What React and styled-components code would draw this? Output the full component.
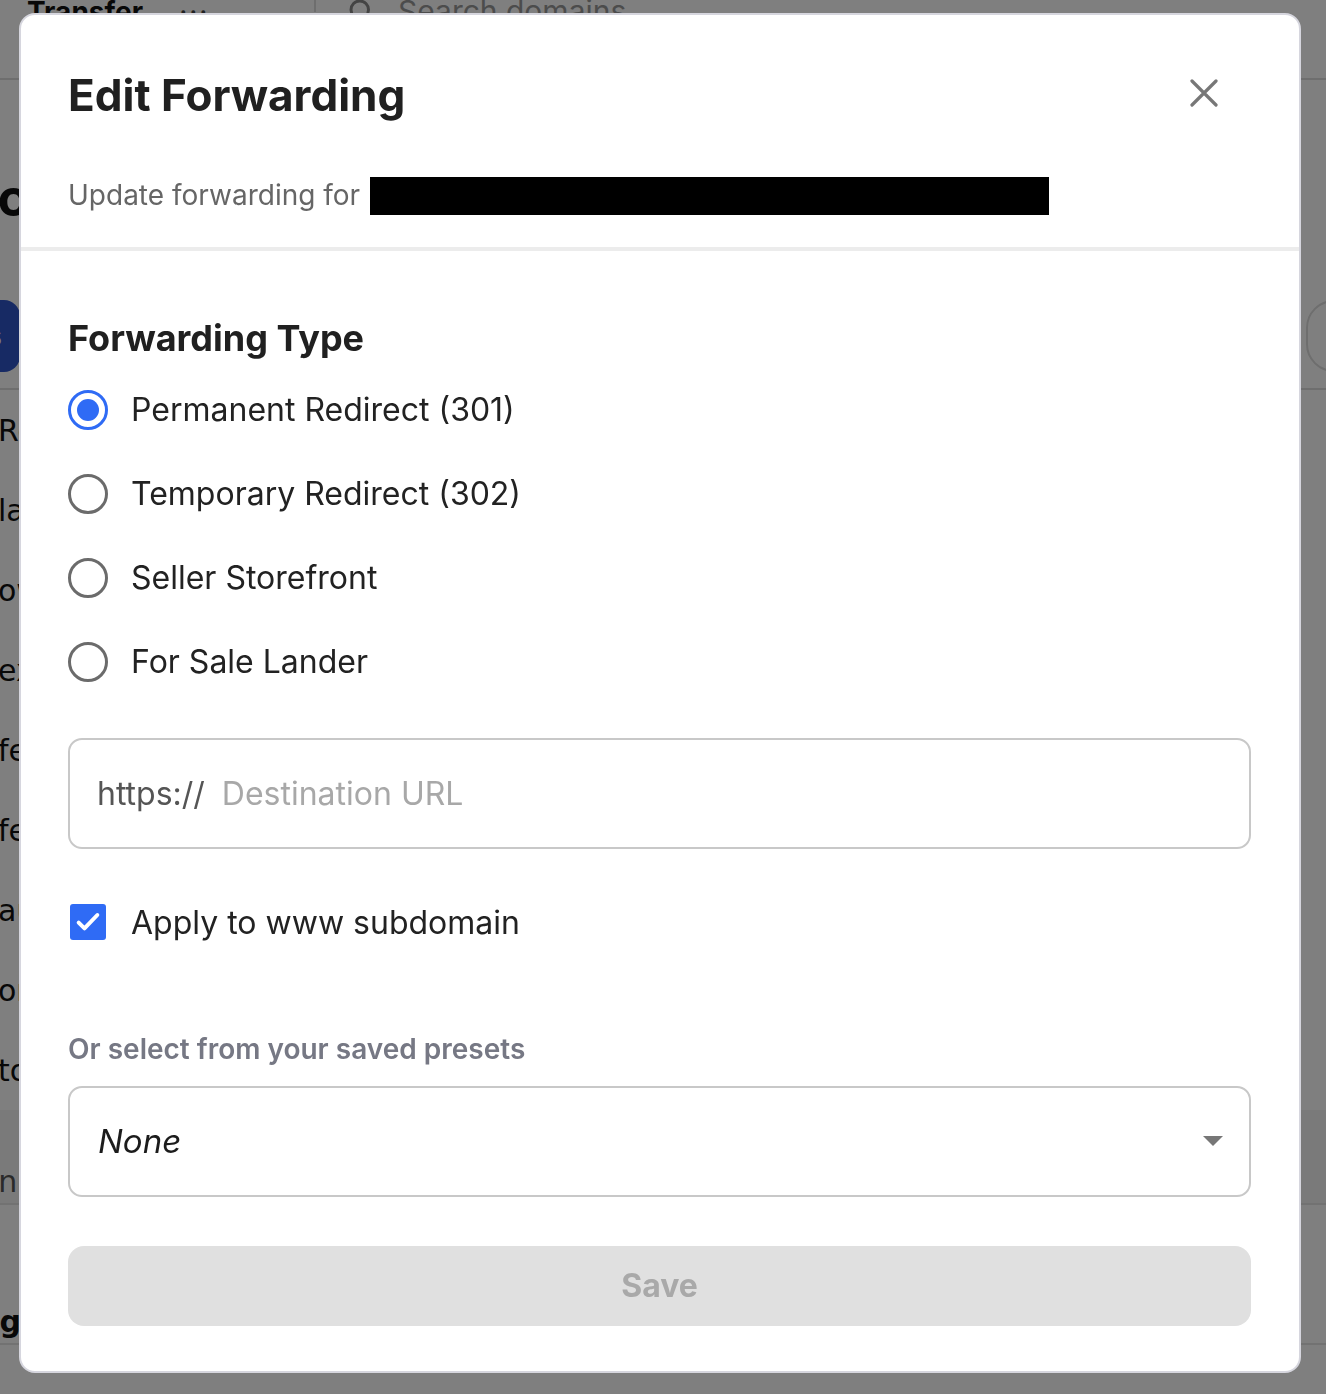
import React, { useState } from 'react';
import styled, { createGlobalStyle } from 'styled-components';

const GlobalStyle = createGlobalStyle`
  * { box-sizing: border-box; }
  html, body { margin: 0; padding: 0; }
  body {
    font-family: Inter, "Noto Sans", "Liberation Sans", sans-serif;
    background: #ffffff;
    overflow: hidden;
  }
`

/* ---------- the page behind the dialog ---------- */

const Page = styled.div`
  width: 1326px;
  height: 1394px;
  background: #ffffff;
  color: #111;
  overflow: hidden;
`
const TopBar = styled.div`
  display: flex;
  align-items: flex-start;
  height: 80px;
  border-bottom: 2px solid #dcdcdc;
`
const Brand = styled.div`
  padding-left: 27px;
  width: 316px;
  font-size: 28px;
  font-weight: 700;
  line-height: 1;
  margin-top: -2px;
  display: flex;
  gap: 36px;
  border-right: 2px solid #dcdcdc;
  height: 14px;
`
const Dots = styled.span`
  font-weight: 400;
  color: #444;
  letter-spacing: 2px;
`
const Search = styled.div`
  display: flex;
  gap: 22px;
  align-items: flex-start;
  padding-left: 30px;
  font-size: 30px;
  line-height: 1;
  margin-top: -4px;
  color: #999;
`
const Heading = styled.div`
  margin: 92px 0 0 -40px;
  font-size: 52px;
  font-weight: 700;
  line-height: 1;
`
const Toolbar = styled.div`
  display: flex;
  justify-content: space-between;
  align-items: center;
  margin-top: 76px;
  height: 72px;
`
const BlueButton = styled.div`
  margin-left: -120px;
  width: 140px;
  height: 72px;
  border-radius: 16px;
  background: #2f55c8;
  color: #fff;
  font-size: 28px;
  font-weight: 600;
  display: flex;
  align-items: center;
  justify-content: flex-end;
  padding-right: 18px;
`
const OutlineButton = styled.div`
  margin-right: -120px;
  width: 140px;
  height: 72px;
  border-radius: 28px;
  border: 2px solid #dcdcdc;
`
const Table = styled.div`
  margin-top: 16px;
  border-top: 2px solid #dcdcdc;
`
const Row = styled.div`
  height: ${p => p.$h || 80}px;
  display: flex;
  align-items: ${p => (p.$bottom ? 'flex-end' : 'center')};
  padding-bottom: ${p => (p.$bottom ? 4 : 0)}px;
  margin-left: ${p => p.$shift || -2}px;
  font-family: "DejaVu Sans", sans-serif;
  font-size: 30px;
  color: ${p => (p.$muted ? '#555' : '#111')};
  font-weight: ${p => (p.$bold ? 700 : 400)};
  background: ${p => (p.$shade ? '#f4f4f4' : 'transparent')};
  border-bottom: ${p => (p.$line ? '2px solid #e4e4e4' : 'none')};
`

/* ---------- the dialog ---------- */

const Overlay = styled.div`
  position: fixed;
  inset: 0;
  background: rgba(0, 0, 0, 0.5);
  display: flex;
  padding: 13px 25px 21px 19px;
`
const Modal = styled.div`
  flex: 1;
  background: #ffffff;
  border-radius: 16px;
  border: 2px solid #d6d6de;
  display: flex;
  flex-direction: column;
  overflow: hidden;
`
const Header = styled.div`
  padding: 54px 48px 32px 47px;
  border-bottom: 4px solid #ececec;
`
const TitleRow = styled.div`
  display: flex;
  justify-content: space-between;
  align-items: center;
`
const Title = styled.h1`
  margin: 0;
  font-size: 44px;
  font-weight: 700;
  line-height: 1.2;
  color: #202020;
`
const CloseButton = styled.button`
  border: none;
  background: transparent;
  padding: 0;
  margin-right: 33px;
  margin-bottom: 4px;
  width: 28px;
  height: 28px;
  display: flex;
  align-items: center;
  justify-content: center;
  cursor: pointer;
`
const SubRow = styled.div`
  display: flex;
  align-items: center;
  gap: 10px;
  margin-top: 55px;
`
const Subtitle = styled.span`
  font-size: 28px;
  color: #666666;
  line-height: 1.2;
`
const Redacted = styled.span`
  display: inline-block;
  width: 679px;
  height: 38px;
  background: #000;
`
const Body = styled.div`
  padding: 66px 48px 46px 47px;
  display: flex;
  flex-direction: column;
`
const SectionTitle = styled.h2`
  margin: 0 0 8px;
  font-size: 36px;
  font-weight: 700;
  line-height: 1.2;
  color: #202020;
`
const RadioList = styled.div`
  display: flex;
  flex-direction: column;
`
const Option = styled.label`
  display: flex;
  align-items: center;
  gap: 23px;
  height: 84px;
  font-size: 32px;
  color: #222;
  cursor: pointer;
`
const Radio = styled.span`
  width: 40px;
  height: 40px;
  border-radius: 50%;
  border: 3px solid ${p => (p.$on ? '#2f6bf5' : '#6b6b6b')};
  display: flex;
  align-items: center;
  justify-content: center;
  flex-shrink: 0;
  &::after {
    content: '';
    width: 22px;
    height: 22px;
    border-radius: 50%;
    background: ${p => (p.$on ? '#2f6bf5' : 'transparent')};
  }
`
const UrlField = styled.div`
  margin-top: 34px;
  height: 111px;
  border: 2px solid #c8c8c8;
  border-radius: 14px;
  display: flex;
  align-items: center;
  padding: 0 27px;
  gap: 17px;
  font-size: 32px;
`
const Prefix = styled.span`
  color: #555;
`
const UrlInput = styled.input`
  flex: 1;
  border: none;
  outline: none;
  font: inherit;
  color: #222;
  padding: 0;
  &::placeholder { color: #a8a8a8; }
`
const CheckRow = styled.label`
  display: flex;
  align-items: center;
  gap: 25px;
  margin-top: 54px;
  padding-left: 2px;
  font-size: 32px;
  color: #222;
  cursor: pointer;
`
const CheckBox = styled.span`
  width: 36px;
  height: 36px;
  border-radius: 3px;
  background: #2f6bf5;
  display: flex;
  align-items: center;
  justify-content: center;
`
const PresetLabel = styled.div`
  margin-top: 91px;
  font-size: 28px;
  font-weight: 600;
  color: #767884;
  line-height: 1.2;
`
const SelectBox = styled.div`
  margin-top: 19px;
  height: 111px;
  border: 2px solid #c8c8c8;
  border-radius: 14px;
  display: flex;
  align-items: center;
  justify-content: space-between;
  padding: 0 26px 0 28px;
  font-size: 33px;
  font-style: italic;
  color: #1c1c1c;
`
const Caret = styled.span`
  width: 0;
  height: 0;
  border-left: 10px solid transparent;
  border-right: 10px solid transparent;
  border-top: 10px solid #777;
`
const SaveButton = styled.button`
  margin-top: 49px;
  height: 80px;
  border: none;
  border-radius: 16px;
  background: #e0e0e0;
  color: #a9a9a9;
  font-family: inherit;
  font-size: 32px;
  font-weight: 700;
  cursor: not-allowed;
`

const options = [
  'Permanent Redirect (301)',
  'Temporary Redirect (302)',
  'Seller Storefront',
  'For Sale Lander',
]

const rows = ['Registrar', 'label', 'owner', 'expires', 'fees', 'fees', 'auto', 'order', 'total']

const App = () => {
  const [type, setType] = useState(0)
  return (
    <>
      <GlobalStyle />
      <Page>
        <TopBar>
          <Brand>Transfer<Dots>···</Dots></Brand>
          <Search>
            <svg width="30" height="30" viewBox="0 0 24 24" fill="none" stroke="#888" strokeWidth="2.4">
              <circle cx="11" cy="11" r="7" />
              <path d="M16 16l5 5" />
            </svg>
            Search domains
          </Search>
        </TopBar>
        <Heading>Domains</Heading>
        <Toolbar>
          <BlueButton>s</BlueButton>
          <OutlineButton />
        </Toolbar>
        <Table>
          {rows.map((r, k) => (
            <Row key={k}>{r}</Row>
          ))}
          <Row $h={95} $shade $line $muted $bottom $shift={-20}>online</Row>
          <Row $h={140} $bold $line $bottom $shift={-22}>bg.io</Row>
        </Table>
      </Page>

      <Overlay>
        <Modal>
          <Header>
            <TitleRow>
              <Title>Edit Forwarding</Title>
              <CloseButton aria-label="Close">
                <svg width="28" height="28" viewBox="0 0 28 28" stroke="#777" strokeWidth="3.2" strokeLinecap="round">
                  <path d="M2 2L26 26M26 2L2 26" />
                </svg>
              </CloseButton>
            </TitleRow>
            <SubRow>
              <Subtitle>Update forwarding for</Subtitle>
              <Redacted />
            </SubRow>
          </Header>

          <Body>
            <SectionTitle>Forwarding Type</SectionTitle>
            <RadioList>
              {options.map((o, i) => (
                <Option key={o} onClick={() => setType(i)}>
                  <Radio $on={type === i} />
                  {o}
                </Option>
              ))}
            </RadioList>

            <UrlField>
              <Prefix>https://</Prefix>
              <UrlInput placeholder="Destination URL" />
            </UrlField>

            <CheckRow>
              <CheckBox>
                <svg width="28" height="28" viewBox="0 0 24 24" fill="none" stroke="#fff" strokeWidth="3.4" strokeLinecap="round" strokeLinejoin="round">
                  <path d="M4 12.5l5 5L20 6" />
                </svg>
              </CheckBox>
              Apply to www subdomain
            </CheckRow>

            <PresetLabel>Or select from your saved presets</PresetLabel>
            <SelectBox>
              None
              <Caret />
            </SelectBox>

            <SaveButton disabled>Save</SaveButton>
          </Body>
        </Modal>
      </Overlay>
    </>
  )
}

export default App
